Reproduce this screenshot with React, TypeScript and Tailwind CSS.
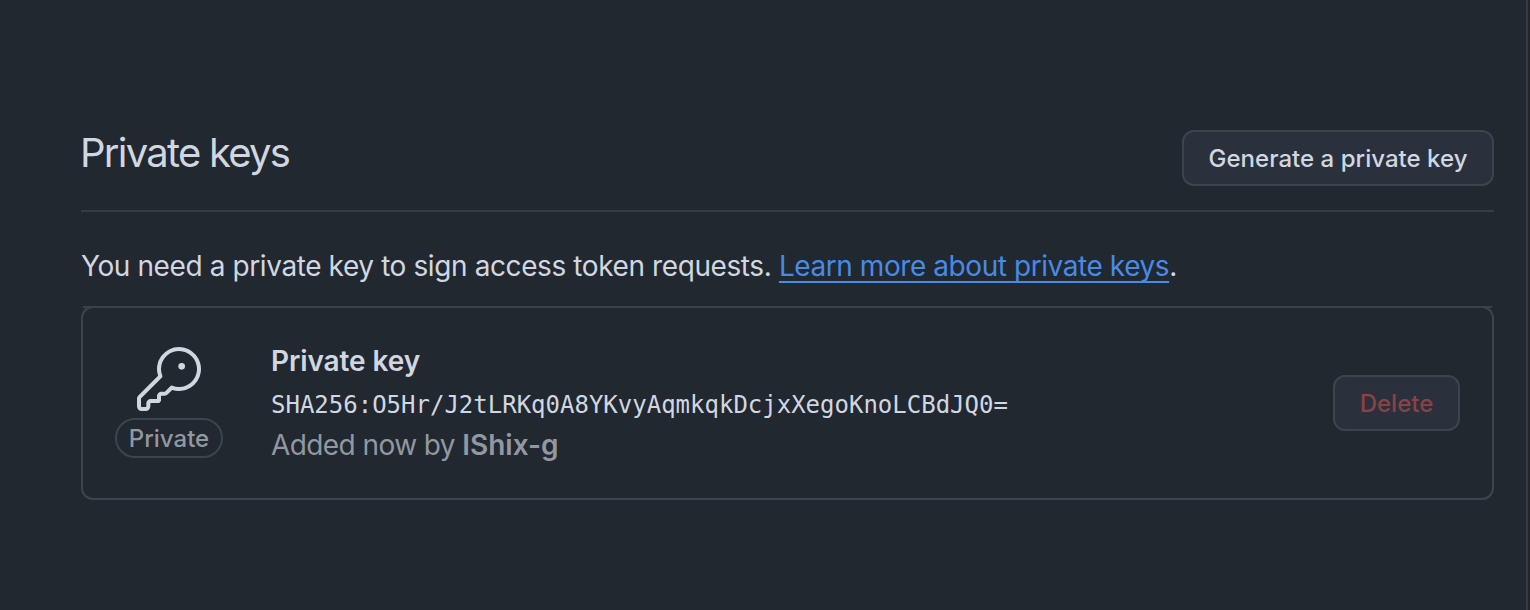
function KeyIcon() {
  return (
    <svg viewBox="0 0 24 24" className="block size-16 fill-[#d1d7e0]" aria-hidden="true">
      <path d="M16.75 8.5a1.25 1.25 0 1 0 0-2.5 1.25 1.25 0 0 0 0 2.5Z" />
      <path d="M15.75 0a8.25 8.25 0 1 1-2.541 16.101l-1.636 1.636a1.744 1.744 0 0 1-1.237.513H9.25a.25.25 0 0 0-.25.25v1.448a.876.876 0 0 1-.256.619l-.214.213a.75.75 0 0 1-.545.22H5.25a.25.25 0 0 0-.25.25v1A1.75 1.75 0 0 1 3.25 24h-1.5A1.75 1.75 0 0 1 0 22.25v-2.836c0-.464.185-.908.513-1.236l7.386-7.388A8.249 8.249 0 0 1 15.75 0ZM9 8.25a6.733 6.733 0 0 0 .463 2.462.75.75 0 0 1-.168.804l-7.722 7.721a.25.25 0 0 0-.073.177v2.836c0 .138.112.25.25.25h1.5a.25.25 0 0 0 .25-.25v-1c0-.966.784-1.75 1.75-1.75H7.5v-1c0-.966.784-1.75 1.75-1.75h1.086a.25.25 0 0 0 .177-.073l1.971-1.972a.75.75 0 0 1 .804-.168A6.75 6.75 0 1 0 9 8.25Z" />
    </svg>
  );
}

export default function App() {
  return (
    <div className="flex h-[610px] w-[1530px] bg-[#212830] font-['Inter',sans-serif] text-[28px] leading-[42px] text-[#d1d7e0]">
      <main className="flex w-[1526px] flex-col pt-[130px] pr-8 pl-[81px]">
        <header className="flex h-[82px] justify-between border-b-2 border-[#353c44]">
          <h2 className="-ml-px text-[40px] leading-[46px] font-[420] tracking-[-1.74px]">Private keys</h2>
          <button className="flex h-14 w-[312px] items-center justify-center rounded-xl border-2 border-[#3d444d] bg-[#2a313c] pt-0.5 text-2xl font-medium tracking-[0.03px]">
            Generate a private key
          </button>
        </header>
        <p className="mt-[33px] h-[41px] whitespace-pre font-[420] tracking-[-0.4px]">
          <span>You need a private key to sign access token requests. </span>
          <a href="#" className="tracking-[-0.43px] text-[#478be6] underline decoration-2 underline-offset-[5px] [text-decoration-skip-ink:none]">Learn more about private keys</a>.
        </p>
        <section className="relative mt-5 flex h-[194px] items-center rounded-xl border-2 border-[#3d444d] px-8">
          <span className="absolute -top-0.5 right-0 left-0 h-0.5 bg-[#3a4149]" />
          <div className="flex w-[108px] flex-col items-center">
            <KeyIcon />
            <span className="mt-[7px] mb-px flex h-10 w-[108px] items-center justify-center rounded-full border-2 border-[#3d444d] pt-0.5 text-2xl font-medium text-[#9198a1]">Private</span>
          </div>
          <div className="ml-12 flex-1 pb-0.5">
            <div className="font-semibold tracking-[-0.1px]">Private key</div>
            <div className="h-[43px] pt-0.5 font-['DejaVu_Sans_Mono',monospace] text-2xl leading-[42px]">SHA256:O5Hr/J2tLRKq0A8YKvyAqmkqkDcjxXegoKnoLCBdJQ0=</div>
            <div className="h-10 leading-10 whitespace-pre font-[420] text-[#9198a1]">
              <span className="tracking-[-0.58px]">Added now by </span>
              <strong className="font-semibold">IShix-g</strong>
            </div>
          </div>
          <button className="flex h-14 w-[127px] items-center justify-center rounded-xl border-2 border-[#3d444d] bg-[#2a313c] pt-0.5 text-2xl font-medium text-[#8b4145]">Delete</button>
        </section>
      </main>
      <div className="w-[2px] bg-[#3b3a40]" />
      <div className="flex-1 bg-[#22262a]" />
    </div>
  );
}
